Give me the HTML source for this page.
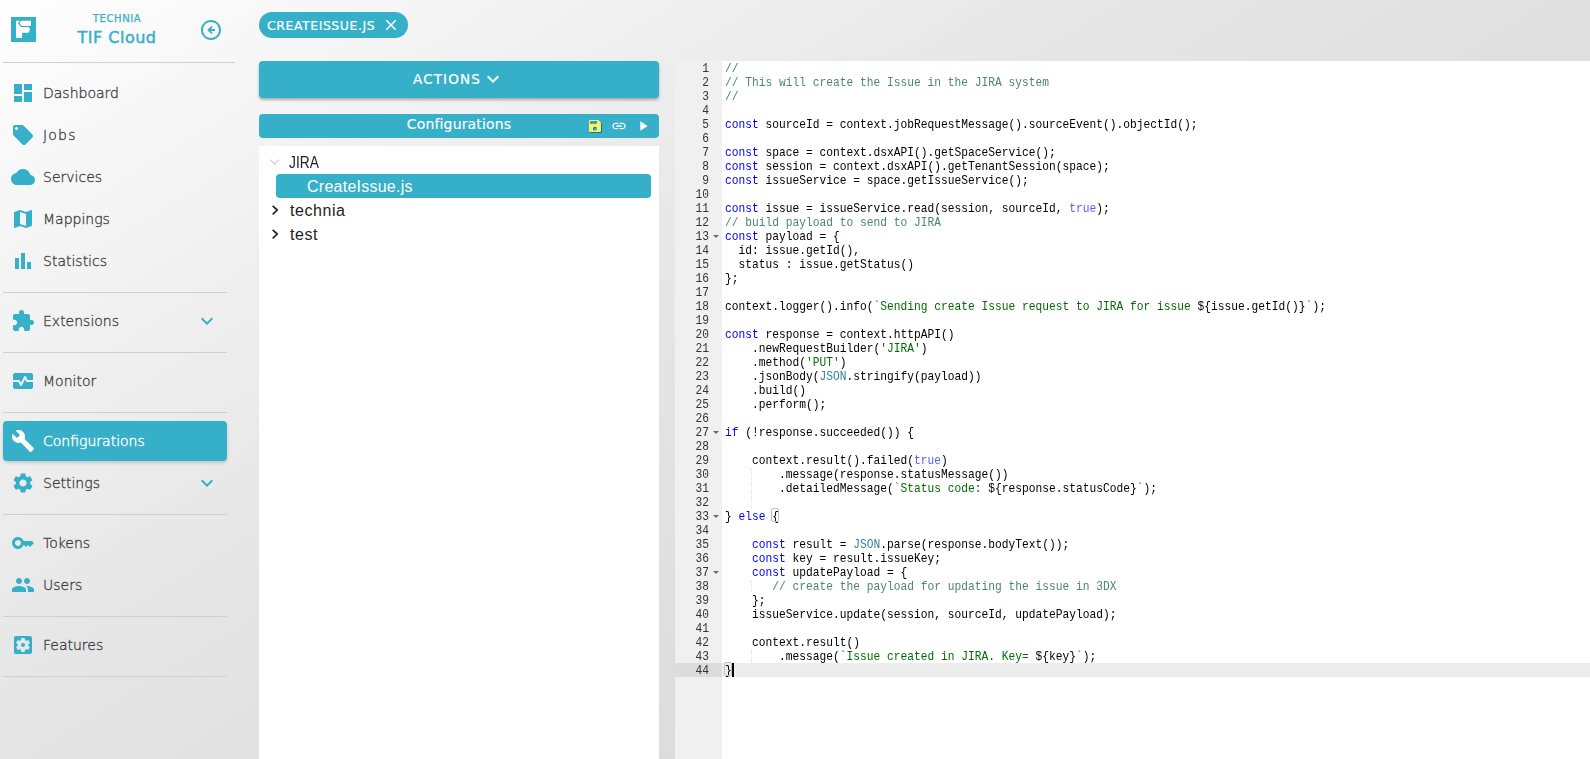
<!DOCTYPE html>
<html lang="en">
<head>
<meta charset="utf-8">
<title>TIF Cloud - Configurations</title>
<style>
*{box-sizing:border-box;margin:0;padding:0}
html,body{width:1590px;height:759px;overflow:hidden}
body{position:relative;font-family:"DejaVu Sans","Liberation Sans",sans-serif;color:#3a3a3a;
 background:linear-gradient(148.500deg,#fefefe 0%,#e6e6e6 40%,#d0d0d0 100%);}
.abs{position:absolute}
svg{display:block}
/* sidebar */
.hr{position:absolute;left:3px;width:224px;height:1px;background:#cfcfcf}
.logo{position:absolute;left:11px;top:17px;width:25px;height:25px;background:#36afc9}
.brand1{position:absolute;left:0;width:234px;top:12.500px;text-align:center;font-size:10px;line-height:12px;color:#36afc9;letter-spacing:0.600px;-webkit-text-stroke:0.250px #36afc9}
.brand2{position:absolute;left:0;width:234px;top:27px;text-align:center;font-size:16px;line-height:22px;color:#36afc9;letter-spacing:0.500px;-webkit-text-stroke:0.450px #36afc9}
.item{position:absolute;left:3px;width:224px;height:40px;border-radius:4px}
.item svg{position:absolute;left:8px;top:8px;width:24px;height:24px;fill:#36afc9}
.item span{position:absolute;left:40px;top:0;line-height:40px;font-size:14px;font-weight:200;color:#3a3a3a;-webkit-text-stroke:0.300px #3a3a3a;white-space:nowrap}
.item svg.chev{left:192px;top:8px}
.item.active{background:#36afc9;box-shadow:0 2px 4px -1px rgba(0,0,0,.24)}
.item.active svg{fill:#fff}
.item.active span{color:#fff;-webkit-text-stroke:0.400px #fff}
/* main */
.chip{position:absolute;left:259px;top:12px;width:149px;height:26px;border-radius:13px;background:#36afc9;color:#fff}
.chip span{position:absolute;left:8px;top:1px;line-height:26px;font-size:12.500px;letter-spacing:0.540px;-webkit-text-stroke:0.200px #fff;white-space:nowrap}
.chip svg{position:absolute;left:123px;top:4px;width:18px;height:18px;fill:#fff}
.btn{position:absolute;left:259px;top:61px;width:400px;height:37px;border-radius:4px;background:#36afc9;box-shadow:0 2px 3px rgba(0,0,0,.3);color:#fff}
.cfgh{position:absolute;left:259px;top:114px;width:400px;height:24px;border-radius:4px;background:#36afc9;color:#fff}
.tree{position:absolute;left:259px;top:146px;width:400px;height:613px;background:#fff;font-family:"Liberation Sans",sans-serif;color:#222}
.sel{position:absolute;left:17px;top:28px;width:375px;height:24px;border-radius:4px;background:#36afc9}
.tree span{position:absolute;font-size:16px;line-height:24px;white-space:nowrap}
/* editor */
.ed{position:absolute;left:675px;top:61px;width:915px;height:698px;background:#fff;font-family:"Liberation Mono","DejaVu Sans Mono",monospace;font-size:11.25px;line-height:14px;color:#000;overflow:hidden;border-top-left-radius:3px}
.gut{position:absolute;left:0;top:0;width:47px;height:698px;background:#f0f0f0;color:#333}
.gut div span{position:relative;top:0.6px;display:inline-block;transform:scaleY(1.1);transform-origin:0 10px}
.gut div{height:14px;padding-right:13px;text-align:right;position:relative}
.gut div.al{background:#dcdcdc}
.gut i{position:absolute;right:3.500px;top:5.500px;width:0;height:0;border-left:3px solid transparent;border-right:3px solid transparent;border-top:3.500px solid #6a6a6a}
.code{position:absolute;left:50px;top:0.6px;right:0;height:698px;white-space:pre}
.code div{height:14px;transform:scaleY(1.1);transform-origin:0 10px}
.al2{position:absolute;left:47px;right:0;top:602px;height:14px;background:rgba(0,0,0,.07)}
.g{background:linear-gradient(#cfcfcf 50%,transparent 50%) right top/1px 2px repeat-y}.m{}.br{position:absolute;width:7.750px;height:14px;border:1px solid #c0c0c0;border-radius:2px}.cur{position:absolute;left:56.75px;top:602px;width:2px;height:14px;background:#000}
.k{color:#0000ff}.c{color:#4c886b}.s{color:#036a07}.b{color:#585cf6}.v{color:#318495}
</style>
</head>
<body>
<div id="side">
<div class="logo"><svg viewBox="0 0 25 25" width="25" height="25"><path fill="#fff" d="M5 3.800H20V9.300H17.600L19.200 12.500 17.400 15.700H11.100V21H5z"/><path fill="none" stroke="#2fa7c3" stroke-width="1.1" d="M9.600 3.600L7.600 6.400 10.500 9.500H20.200"/></svg></div>
<div class="brand1">TECHNIA</div>
<div class="brand2">TIF Cloud</div>
<svg class="abs" style="left:199px;top:18px;fill:#36afc9" width="24" height="24" viewBox="0 0 24 24"><path d="M12 2C6.480 2 2 6.480 2 12s4.480 10 10 10 10-4.480 10-10S17.520 2 12 2zm0 18c-4.410 0-8-3.590-8-8s3.590-8 8-8 8 3.590 8 8-3.590 8-8 8z"/><path d="M16 11h-4.200l1.800-1.800L12.300 7.900 8.200 12l4.100 4.100 1.300-1.300-1.800-1.800H16z"/></svg>
<div class="hr" style="top:62px;width:232px"></div>
<div class="hr" style="top:292px"></div>
<div class="hr" style="top:352px"></div>
<div class="hr" style="top:412px"></div>
<div class="hr" style="top:514px"></div>
<div class="hr" style="top:616px"></div>
<div class="hr" style="top:676px"></div>
<div class="item" style="top:73px"><svg viewBox="0 0 24 24"><path d="M3 13h8V3H3v10zm0 8h8v-6H3v6zm10 0h8V11h-8v10zm0-18v6h8V3h-8z"/></svg><span>Dashboard</span></div>
<div class="item" style="top:115px"><svg viewBox="0 0 24 24"><path d="M21.41 11.58l-9-9C12.05 2.22 11.55 2 11 2H4c-1.1 0-2 .9-2 2v7c0 .55.22 1.05.59 1.42l9 9c.36.36.86.58 1.41.58.55 0 1.05-.22 1.41-.59l7-7c.37-.36.59-.86.59-1.41 0-.55-.23-1.06-.59-1.42zM5.5 7C4.67 7 4 6.33 4 5.5S4.67 4 5.5 4 7 4.67 7 5.5 6.33 7 5.5 7z"/></svg><span style="letter-spacing:1.200px">Jobs</span></div>
<div class="item" style="top:157px"><svg viewBox="0 0 24 24"><path d="M19.35 10.04C18.67 6.59 15.64 4 12 4 9.11 4 6.6 5.64 5.35 8.04 2.34 8.36 0 10.91 0 14c0 3.31 2.69 6 6 6h13c2.76 0 5-2.24 5-5 0-2.64-2.05-4.78-4.65-4.96z"/></svg><span>Services</span></div>
<div class="item" style="top:199px"><svg viewBox="0 0 24 24"><path d="M20.5 3l-.16.03L15 5.1 9 3 3.36 4.9c-.21.07-.36.25-.36.48V20.5c0 .28.22.5.5.5l.16-.03L9 18.9l6 2.1 5.64-1.9c.21-.07.36-.25.36-.48V3.5c0-.28-.22-.5-.5-.5zM15 19l-6-2.11V5l6 2.11V19z"/></svg><span>Mappings</span></div>
<div class="item" style="top:241px"><svg viewBox="0 0 24 24"><path d="M4 9h4v11H4V9zM16 13h4v7h-4V13zM10 4h4v16h-4V4z"/></svg><span>Statistics</span></div>
<div class="item" style="top:301px"><svg viewBox="0 0 24 24"><path d="M20.5 11H19V7c0-1.1-.9-2-2-2h-4V3.5C13 2.12 11.88 1 10.5 1S8 2.12 8 3.5V5H4c-1.1 0-1.99.9-1.99 2v3.8H3.5c1.49 0 2.7 1.21 2.7 2.7s-1.21 2.7-2.7 2.7H2V20c0 1.1.9 2 2 2h3.8v-1.5c0-1.49 1.21-2.7 2.7-2.7 1.49 0 2.7 1.21 2.7 2.7V22H17c1.1 0 2-.9 2-2v-4h1.5c1.38 0 2.5-1.12 2.5-2.5S21.88 11 20.5 11z"/></svg><span>Extensions</span><svg class="chev" viewBox="0 0 24 24"><path d="M16.59 8.59L12 13.17 7.41 8.59 6 10l6 6 6-6z"/></svg></div>
<div class="item" style="top:361px"><svg viewBox="0 0 24 24"><path d="M15.11 12.45L14 10.24l-3.11 6.21c-.16.34-.51.55-.89.55s-.73-.21-.89-.55L7.38 13H2v5c0 1.1.9 2 2 2h16c1.1 0 2-.9 2-2v-5h-6c-.38 0-.73-.21-.89-.55zM20 4H4c-1.1 0-2 .9-2 2v5h6c.38 0 .73.21.89.55L10 13.76l3.11-6.21c.34-.68 1.45-.68 1.79 0L16.62 11H22V6c0-1.1-.9-2-2-2z"/></svg><span>Monitor</span></div>
<div class="item active" style="top:421px"><svg viewBox="0 0 24 24"><path d="M22.7 19l-9.1-9.1c.9-2.3.4-5-1.5-6.9-2-2-5-2.4-7.4-1.3L9 6 6 9 1.6 4.7C.4 7.1.9 10.1 2.9 12.1c1.9 1.9 4.6 2.4 6.9 1.5l9.1 9.1c.4.4 1 .4 1.4 0l2.3-2.3c.5-.4.5-1.1.1-1.4z"/></svg><span>Configurations</span></div>
<div class="item" style="top:463px"><svg viewBox="0 0 24 24"><path d="M19.14 12.94c.04-.3.06-.61.06-.94 0-.32-.02-.64-.07-.94l2.03-1.58c.18-.14.23-.41.12-.61l-1.92-3.32c-.12-.22-.37-.29-.59-.22l-2.39.96c-.5-.38-1.03-.7-1.62-.94l-.36-2.54c-.04-.24-.24-.41-.48-.41h-3.84c-.24 0-.43.17-.47.41l-.36 2.54c-.59.24-1.13.57-1.62.94l-2.39-.96c-.22-.08-.47 0-.59.22L2.74 8.87c-.12.21-.08.47.12.61l2.03 1.58c-.05.3-.09.63-.09.94s.02.64.07.94l-2.03 1.58c-.18.14-.23.41-.12.61l1.92 3.32c.12.22.37.29.59.22l2.39-.96c.5.38 1.03.7 1.62.94l.36 2.54c.05.24.24.41.48.41h3.84c.24 0 .44-.17.47-.41l.36-2.54c.59-.24 1.13-.56 1.62-.94l2.39.96c.22.08.47 0 .59-.22l1.92-3.32c.12-.22.07-.47-.12-.61l-2.01-1.58zM12 15.6c-1.98 0-3.6-1.62-3.6-3.6s1.62-3.6 3.6-3.600 3.6 1.62 3.6 3.6-1.62 3.6-3.6 3.6z"/></svg><span>Settings</span><svg class="chev" viewBox="0 0 24 24"><path d="M16.59 8.59L12 13.17 7.41 8.59 6 10l6 6 6-6z"/></svg></div>
<div class="item" style="top:523px"><svg viewBox="0 0 24 24"><path d="M21 10h-8.350C11.830 7.670 9.610 6 7 6c-3.310 0-6 2.690-6 6s2.690 6 6 6c2.610 0 4.830-1.670 5.650-4H13l2 2 2-2 2 2 4-4.040L21 10zM7 15c-1.650 0-3-1.350-3-3s1.350-3 3-3 3 1.350 3 3-1.350 3-3 3z"/></svg><span>Tokens</span></div>
<div class="item" style="top:565px"><svg viewBox="0 0 24 24"><path d="M16 11c1.66 0 2.99-1.34 2.99-3S17.66 5 16 5c-1.66 0-3 1.34-3 3s1.34 3 3 3zm-8 0c1.66 0 2.99-1.34 2.99-3S9.66 5 8 5C6.34 5 5 6.34 5 8s1.34 3 3 3zm0 2c-2.33 0-7 1.17-7 3.5V19h14v-2.500c0-2.33-4.670-3.500-7-3.500zm8 0c-.29 0-.62.02-.97.05 1.16.84 1.97 1.97 1.97 3.450V19h6v-2.500c0-2.330-4.670-3.500-7-3.500z"/></svg><span>Users</span></div>
<div class="item" style="top:625px"><svg viewBox="0 0 24 24"><path d="M12 10c-1.1 0-2 .9-2 2s.9 2 2 2 2-.9 2-2-.9-2-2-2zm7-7H5c-1.11 0-2 .9-2 2v14c0 1.1.89 2 2 2h14c1.11 0 2-.9 2-2V5c0-1.1-.89-2-2-2zm-1.750 9c0 .23-.02.46-.05.68l1.48 1.16c.13.11.17.3.08.45l-1.4 2.42c-.09.15-.27.21-.43.15l-1.74-.7c-.36.28-.76.51-1.18.69l-.26 1.85c-.03.17-.18.3-.35.3h-2.8c-.17 0-.32-.13-.35-.29l-.26-1.85c-.43-.18-.82-.41-1.18-.69l-1.74.7c-.16.06-.34 0-.43-.15l-1.4-2.42c-.09-.15-.05-.34.08-.45l1.48-1.16c-.03-.23-.05-.46-.05-.69 0-.23.02-.46.05-.68l-1.48-1.16c-.13-.11-.17-.3-.08-.45l1.4-2.42c.09-.15.27-.21.43-.15l1.74.7c.36-.28.76-.51 1.18-.69l.26-1.85c.03-.17.18-.3.35-.3h2.8c.17 0 .32.13.35.29l.26 1.85c.43.18.82.41 1.18.69l1.74-.7c.16-.06.34 0 .43.15l1.4 2.42c.09.15.05.34-.08.45l-1.48 1.16c.03.23.05.46.05.69z"/></svg><span>Features</span></div>
</div>
<div id="main">
<div class="chip"><span>CREATEISSUE.JS</span><svg viewBox="0 0 24 24"><path d="M19 6.41L17.59 5 12 10.59 6.41 5 5 6.41 10.59 12 5 17.59 6.41 19 12 13.41 17.59 19 19 17.59 13.41 12z"/></svg></div>
<div class="btn"><span class="abs" style="left:154px;top:0;line-height:37px;font-size:13.500px;letter-spacing:1.150px;-webkit-text-stroke:0.200px #fff;white-space:nowrap">ACTIONS</span><svg class="abs" style="left:222px;top:6px;fill:#fff" width="24" height="24" viewBox="0 0 24 24"><path d="M16.59 8.59L12 13.17 7.41 8.59 6 10l6 6 6-6z"/></svg></div>
<div class="cfgh"><span class="abs" style="left:0;width:400px;text-align:center;top:0;line-height:21px;font-size:14px;letter-spacing:0.150px;-webkit-text-stroke:0.150px #fff">Configurations</span><svg class="abs" style="left:327.900px;top:4px;fill:#f8f16c;filter:drop-shadow(1px 1px 0 rgba(0,0,0,.35))" width="16" height="16" viewBox="0 0 24 24"><path d="M17 3H5c-1.11 0-2 .9-2 2v14c0 1.1.89 2 2 2h14c1.1 0 2-.9 2-2V7l-4-4zm-5 16c-1.66 0-3-1.34-3-3s1.340-3 3-3 3 1.340 3 3-1.340 3-3 3zm3-10H5V5h10v4z"/></svg><svg class="abs" style="left:351.800px;top:4px;fill:#fff" width="16" height="16" viewBox="0 0 24 24"><path d="M3.9 12c0-1.71 1.39-3.1 3.1-3.1h4V7H7c-2.76 0-5 2.24-5 5s2.24 5 5 5h4v-1.9H7c-1.71 0-3.1-1.39-3.1-3.1zM8 13h8v-2H8v2zm9-6h-4v1.900h4c1.710 0 3.100 1.390 3.100 3.100s-1.390 3.100-3.100 3.100h-4V17h4c2.760 0 5-2.240 5-5s-2.240-5-5-5z"/></svg><svg class="abs" style="left:375.700px;top:4px;fill:#fff" width="16" height="16" viewBox="0 0 24 24"><path d="M8 5v14l11-7z"/></svg></div>
<div class="tree"><div class="sel"></div><svg class="abs" style="left:8px;top:8px" width="16" height="16" viewBox="0 0 16 16"><path d="M3.300 5.600L7.600 10 11.900 5.600" fill="none" stroke="#cdcdcd" stroke-width="1.200"/></svg><span style="left:30px;top:5px;transform:scaleX(.86);transform-origin:0 0">JIRA</span><span style="left:48px;top:29px;color:#fff;letter-spacing:0.250px">CreateIssue.js</span><svg class="abs" style="left:8px;top:55.500px" width="16" height="16" viewBox="0 0 16 16"><path d="M5.700 3.900L10.200 8.100 5.700 12.300" fill="none" stroke="#1c1c1c" stroke-width="1.600"/></svg><span style="left:31px;top:53px;letter-spacing:0.550px">technia</span><svg class="abs" style="left:8px;top:79.500px" width="16" height="16" viewBox="0 0 16 16"><path d="M5.700 3.900L10.200 8.100 5.700 12.300" fill="none" stroke="#1c1c1c" stroke-width="1.600"/></svg><span style="left:31px;top:77px;letter-spacing:0.550px">test</span></div>
</div>
<div class="ed" id="ed"><div class="gut"><div><span>1</span></div><div><span>2</span></div><div><span>3</span></div><div><span>4</span></div><div><span>5</span></div><div><span>6</span></div><div><span>7</span></div><div><span>8</span></div><div><span>9</span></div><div><span>10</span></div><div><span>11</span></div><div><span>12</span></div><div><span>13</span><i></i></div><div><span>14</span></div><div><span>15</span></div><div><span>16</span></div><div><span>17</span></div><div><span>18</span></div><div><span>19</span></div><div><span>20</span></div><div><span>21</span></div><div><span>22</span></div><div><span>23</span></div><div><span>24</span></div><div><span>25</span></div><div><span>26</span></div><div><span>27</span><i></i></div><div><span>28</span></div><div><span>29</span></div><div><span>30</span></div><div><span>31</span></div><div><span>32</span></div><div><span>33</span><i></i></div><div><span>34</span></div><div><span>35</span></div><div><span>36</span></div><div><span>37</span><i></i></div><div><span>38</span></div><div><span>39</span></div><div><span>40</span></div><div><span>41</span></div><div><span>42</span></div><div><span>43</span></div><div class="al"><span>44</span></div></div><div class="al2"></div><div class="code"><div><span class="c">//</span></div><div><span class="c">// This will create the Issue in the JIRA system</span></div><div><span class="c">//</span></div><div></div><div><span class="k">const</span> sourceId = context.jobRequestMessage().sourceEvent().objectId();</div><div></div><div><span class="k">const</span> space = context.dsxAPI().getSpaceService();</div><div><span class="k">const</span> session = context.dsxAPI().getTenantSession(space);</div><div><span class="k">const</span> issueService = space.getIssueService();</div><div></div><div><span class="k">const</span> issue = issueService.read(session, sourceId, <span class="b">true</span>);</div><div><span class="c">// build payload to send to JIRA</span></div><div><span class="k">const</span> payload = {</div><div>  id: issue.getId(),</div><div>  status : issue.getStatus()</div><div>};</div><div></div><div>context.logger().info(<span class="s">`Sending create Issue request to JIRA for issue </span>${issue.getId()}<span class="s">`</span>);</div><div></div><div><span class="k">const</span> response = context.httpAPI()</div><div>    .newRequestBuilder(<span class="s">'JIRA'</span>)</div><div>    .method(<span class="s">'PUT'</span>)</div><div>    .jsonBody(<span class="v">JSON</span>.stringify(payload))</div><div>    .build()</div><div>    .perform();</div><div></div><div><span class="k">if</span> (!response.succeeded()) {</div><div></div><div>    context.result().failed(<span class="b">true</span>)</div><div><span class="g">    </span>    .message(response.statusMessage())</div><div><span class="g">    </span>    .detailedMessage(<span class="s">`Status code: </span>${response.statusCode}<span class="s">`</span>);</div><div><span class="g">    </span></div><div>} <span class="k">else</span> <span class="m">{</span></div><div></div><div>    <span class="k">const</span> result = <span class="v">JSON</span>.parse(response.bodyText());</div><div>    <span class="k">const</span> key = result.issueKey;</div><div>    <span class="k">const</span> updatePayload = {</div><div><span class="g">    </span>   <span class="c">// create the payload for updating the issue in 3DX</span></div><div>    };</div><div>    issueService.update(session, sourceId, updatePayload);</div><div></div><div>    context.result()</div><div><span class="g">    </span>    .message(<span class="s">`Issue created in JIRA. Key= </span>${key}<span class="s">`</span>);</div><div><span class="m">}</span></div></div><div class="br" style="left:96.250px;top:447px"></div><div class="br" style="left:49px;top:601px"></div><div class="cur"></div></div>
</body>
</html>
